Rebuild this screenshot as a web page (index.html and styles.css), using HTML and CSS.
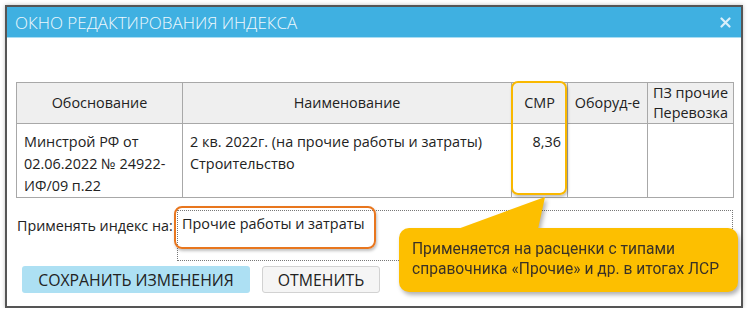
FILE: index.html
```html
<!DOCTYPE html>
<html lang="ru">

<head>
    <meta charset="UTF-8">
    <meta name="viewport" content="width=device-width, initial-scale=1.0">
    <title>Окно редактирования индекса</title>
    <link rel="stylesheet" href="styles.css">
</head>

<body>
    <div class="window">
        <div class="window-title">
            <span>ОКНО РЕДАКТИРОВАНИЯ ИНДЕКСА</span>
            <svg class="close" width="11" height="11" viewBox="0 0 11 11">
                <path d="M1.5 1.5 L9.5 9.5 M9.5 1.5 L1.5 9.5" stroke="#d8effa" stroke-width="2.2" stroke-linecap="round" />
            </svg>
        </div>
        <div class="window-body">
            <table class="index-table">
                <colgroup>
                    <col style="width: 166px">
                    <col style="width: 329px">
                    <col style="width: 56px">
                    <col style="width: 80px">
                    <col style="width: 86px">
                </colgroup>
                <thead>
                    <tr>
                        <th>Обоснование</th>
                        <th>Наименование</th>
                        <th>СМР</th>
                        <th>Оборуд-е</th>
                        <th>ПЗ прочие<br>Перевозка</th>
                    </tr>
                </thead>
                <tbody>
                    <tr>
                        <td>Минстрой РФ от 02.06.2022 № 24922-ИФ/09 п.22</td>
                        <td>2 кв. 2022г. (на прочие работы и затраты)<br>Строительство</td>
                        <td class="num">8,36</td>
                        <td></td>
                        <td></td>
                    </tr>
                </tbody>
            </table>

            <div class="apply-row">
                <label>Применять индекс на:</label>
                <div class="apply-field">Прочие работы и затраты</div>
            </div>

            <div class="buttons">
                <button class="btn btn-save">СОХРАНИТЬ ИЗМЕНЕНИЯ</button>
                <button class="btn btn-cancel">ОТМЕНИТЬ</button>
            </div>
        </div>

        <!-- пометки поверх окна -->
        <div class="mark-smr"></div>
        <div class="mark-field"></div>
        <div class="callout">
            <div class="callout-tail"></div>
            <div class="callout-box">Применяется на расценки с типами<br>справочника «Прочие» и др. в итогах ЛСР</div>
        </div>
    </div>
</body>

</html>
```

FILE: styles.css
```css
* {
    box-sizing: border-box;
}

body {
    margin: 0;
    background: #fff;
    font-family: "Open Sans", "Noto Sans", sans-serif;
    color: #222;
}

.window {
    position: relative;
    width: 738px;
    height: 303px;
    margin: 5px 0 0 5px;
    border: 2px solid #555;
    background: #fff;
    box-shadow: 0 0 4px rgba(0, 0, 0, 0.25);
}

.window-title {
    height: 31px;
    background: #3fb0e1;
    border-bottom: 1px solid #a9ddf3;
    display: flex;
    align-items: center;
    justify-content: space-between;
    padding: 0 10px 0 8px;
    color: #eef8fd;
    font-size: 17px;
    font-weight: 300;
}

.window-body {
    padding: 44px 8px 0 9px;
}

.index-table {
    width: 717px;
    border-collapse: collapse;
    table-layout: fixed;
    font-size: 14.4px;
    color: #222;
}

.index-table th,
.index-table td {
    border: 1px solid #a8a8a8;
}

.index-table th {
    height: 40px;
    background: #efefef;
    font-weight: normal;
    line-height: 20px;
    padding: 0 2px;
}

.index-table td {
    height: 72px;
    vertical-align: top;
    padding: 7px 6px 0 7px;
    line-height: 22px;
}

.index-table td.num {
    text-align: right;
}

.apply-row {
    display: flex;
    margin-top: 12px;
    font-size: 14.3px;
}

.apply-row label {
    width: 161px;
    padding: 6px 0 0 1px;
}

.apply-field {
    width: 556px;
    height: 51px;
    border: 1px dotted #777;
    padding: 3px 4px;
    font-size: 14.4px;
}

.buttons {
    display: flex;
    gap: 12px;
    margin-top: 5px;
    padding-left: 6px;
}

.btn {
    height: 27px;
    border: 1px solid transparent;
    border-radius: 3px;
    font-family: inherit;
    font-size: 15.8px;
    color: #222;
    padding: 0;
}

.btn-save {
    width: 228px;
    background: #ade0f3;
}

.btn-cancel {
    width: 118px;
    background: #f5f5f5;
    border-color: #d2d2d2;
}

.mark-smr {
    position: absolute;
    left: 504px;
    top: 74px;
    width: 56px;
    height: 114px;
    border: 2px solid #f9b800;
    border-radius: 7px;
    box-shadow: 1px 2px 3px rgba(0, 0, 0, 0.25);
}

.mark-field {
    position: absolute;
    left: 167px;
    top: 199px;
    width: 202px;
    height: 43px;
    border: 2px solid #e8761e;
    border-radius: 8px;
    box-shadow: 1px 2px 3px rgba(0, 0, 0, 0.25);
}

.callout {
    position: absolute;
    left: 392px;
    top: 221px;
    width: 339px;
    height: 64px;
    filter: drop-shadow(2px 3px 2px rgba(0, 0, 0, 0.3));
}

.callout-tail {
    position: absolute;
    left: 56px;
    top: -31px;
    width: 90px;
    height: 33px;
    background: #fdbf00;
    clip-path: polygon(100% 0, 0 100%, 92% 100%);
}

.callout-box {
    height: 100%;
    background: #fdbf00;
    border-radius: 10px;
    padding: 11px 0 0 13px;
    font-family: Roboto, sans-serif;
    font-size: 15.6px;
    line-height: 20px;
    color: #3a3226;
}
```
